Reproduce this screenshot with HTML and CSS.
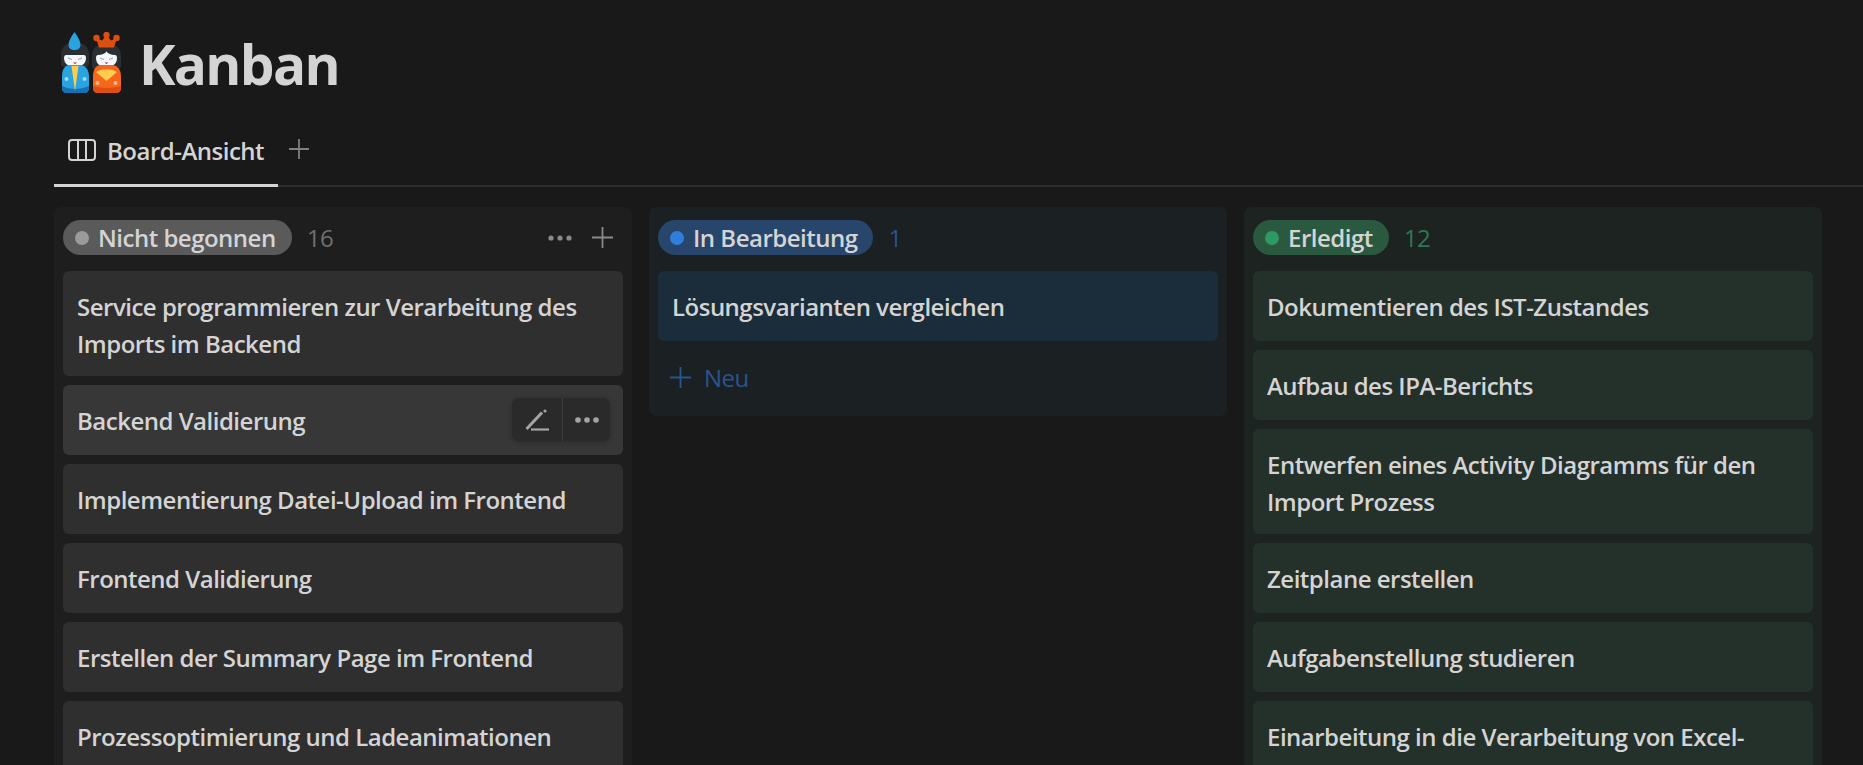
FILE: index.html
```html
<!DOCTYPE html>
<html>
<head>
    <title>Kanban</title>
    <link rel="stylesheet" href="styles.css">
</head>
<body>
    <header class="page-title">
        <svg class="title-icon" viewBox="0 0 62 62">
            <!-- blue doll -->
            <path d="M1 32V22c0-7 6-12 14-12s14 5 14 12v10c0 2-2 3-3 3H4c-1 0-3-1-3-3z" fill="#292f33"/>
            <path d="M14.500 0C11 5 8.500 9 8.500 13c0 3 2.500 5 6 5s6-2 6-5c0-4-2.500-8-6-13z" fill="#2aa4e0"/>
            <path d="M6 23h18c1 0 2 1 2 3 0 6-5 9-11 9S4 32 4 26c0-2 1-3 2-3z" fill="#f5f8fa"/>
            <path d="M8 26l4 1.500M22 26l-4 1.500" stroke="#99aab5" stroke-width="1.200" fill="none"/>
            <path d="M13 30.500h4l-2 1.500z" fill="#be1931"/>
            <path d="M9 33h12c5 1 8 5 8 12v11c0 3-2 5-5 5H7c-3 0-5-2-5-5V45c0-7 2-11 7-12z" fill="#2aa4e0"/>
            <path d="M2 54c4 2 8 3 13 3s9-1 14-3v2c0 3-2 5-5 5H7c-3 0-5-2-5-5z" fill="#1a6fae"/>
            <path d="M11.500 34h7L15 59z" fill="#ffcc4d"/>
            <circle cx="6.500" cy="47" r="2" fill="#a6d8f0"/>
            <circle cx="24.500" cy="47" r="2" fill="#a6d8f0"/>
            <!-- orange doll -->
            <path d="M32 34V24c0-8 6-13 14.500-13S61 16 61 24v10c0 2-1 3-3 3H35c-2 0-3-1-3-3z" fill="#292f33"/>
            <circle cx="36.500" cy="6" r="3.200" fill="#dd4f11"/>
            <circle cx="46.500" cy="3" r="3.200" fill="#dd4f11"/>
            <circle cx="56.500" cy="6" r="3.200" fill="#dd4f11"/>
            <path d="M36 6l6 2.500L46.500 3 51 8.500 57 6l-3 9.500H39z" fill="#dd4f11"/>
            <path d="M38 23c4 0 7-1.500 8.500-3.500C48 21.500 51 23 55 23c1.500 0 2 1.500 2 3 0 6-4.500 9-10.500 9S36 32 36 26c0-1.500.5-3 2-3z" fill="#f5f8fa"/>
            <path d="M40 26l4 1.500M53 26l-4 1.500" stroke="#99aab5" stroke-width="1.200" fill="none"/>
            <path d="M44.500 30.500h4l-2 1.500z" fill="#be1931"/>
            <path d="M40 33h13c5 1 8 5 8 12v11c0 3-2 5-5 5H38c-3 0-5-2-5-5V45c0-7 2-11 7-12z" fill="#f4671c"/>
            <path d="M33 54c5 1 9 2 13.500 2s9-1 14.500-2v2c0 3-2 5-5 5H38c-3 0-5-2-5-5z" fill="#dd4f11"/>
            <path d="M46.500 49L36 40c3-2 6-2.500 10.500-2.500S54 38 57 40z" fill="#ffcc4d"/>
            <circle cx="37.500" cy="51" r="2" fill="#ffb38a"/>
            <circle cx="55.500" cy="51" r="2" fill="#ffb38a"/>
        </svg>
        <h1>Kanban</h1>
    </header>

    <nav class="tabs">
        <div class="tab">
            <svg class="tab-icon" viewBox="0 0 28 22" fill="none" stroke="#d4d4d4" stroke-width="2">
                <rect x="1" y="1" width="26" height="20" rx="3"/>
                <path d="M10 1v20M18 1v20"/>
            </svg>
            <span>Board-Ansicht</span>
        </div>
        <svg class="tab-add" viewBox="0 0 20 20" stroke="#7f7f7f" stroke-width="1.800">
            <path d="M10 0v20M0 10h20"/>
        </svg>
    </nav>

    <main class="board">
        <section class="column column-gray">
            <div class="column-head">
                <span class="pill"><i class="dot"></i>Nicht begonnen</span>
                <span class="count">16</span>
                <span class="column-actions">
                    <svg class="more" viewBox="0 0 24 6" fill="#8a8a8a"><circle cx="3" cy="3" r="2.600"/><circle cx="12" cy="3" r="2.600"/><circle cx="21" cy="3" r="2.600"/></svg>
                    <svg class="plus" viewBox="0 0 21 21" stroke="#8a8a8a" stroke-width="1.800"><path d="M10.500 0v21M0 10.500h21"/></svg>
                </span>
            </div>
            <div class="card">Service programmieren zur Verarbeitung des Imports im Backend</div>
            <div class="card card-hover">Backend Validierung
                <div class="card-tools">
                    <span class="tool tool-edit">
                        <svg viewBox="0 0 24 22" fill="none" stroke="#a5a5a5">
                            <path d="M1.500 20L17 3.500" stroke-width="3"/>
                            <circle cx="20" cy="2" r="1.600" fill="#a5a5a5" stroke="none"/>
                            <path d="M6 20.500h18" stroke-width="2.200"/>
                        </svg>
                    </span>
                    <span class="tool">
                        <svg class="more" viewBox="0 0 24 6" fill="#a5a5a5"><circle cx="3" cy="3" r="2.800"/><circle cx="12" cy="3" r="2.800"/><circle cx="21" cy="3" r="2.800"/></svg>
                    </span>
                </div>
            </div>
            <div class="card">Implementierung Datei-Upload im Frontend</div>
            <div class="card">Frontend Validierung</div>
            <div class="card">Erstellen der Summary Page im Frontend</div>
            <div class="card">Prozessoptimierung und Ladeanimationen</div>
        </section>

        <section class="column column-blue">
            <div class="column-head">
                <span class="pill"><i class="dot"></i>In Bearbeitung</span>
                <span class="count">1</span>
            </div>
            <div class="card">Lösungsvarianten vergleichen</div>
            <div class="add-row">
                <svg class="plus" viewBox="0 0 21 21" stroke="#28558f" stroke-width="1.800"><path d="M10.500 0v21M0 10.500h21"/></svg>
                <span>Neu</span>
            </div>
        </section>

        <section class="column column-green">
            <div class="column-head">
                <span class="pill"><i class="dot"></i>Erledigt</span>
                <span class="count">12</span>
            </div>
            <div class="card">Dokumentieren des IST-Zustandes</div>
            <div class="card">Aufbau des IPA-Berichts</div>
            <div class="card">Entwerfen eines Activity Diagramms für den Import Prozess</div>
            <div class="card">Zeitplane erstellen</div>
            <div class="card">Aufgabenstellung studieren</div>
            <div class="card">Einarbeitung in die Verarbeitung von Excel-Dateien</div>
        </section>
    </main>
</body>
</html>
```

FILE: styles.css
```css
html, body {
    height: 100%;
    overflow: hidden;
}

body {
    margin: 0;
    background-color: #191919;
    color: #d4d4d4;
    font-family: "Open Sans", "Noto Sans", sans-serif;
    font-size: 24px;
    letter-spacing: -0.5px;
}

.page-title {
    display: flex;
    align-items: center;
    gap: 17px;
    height: 62px;
    padding: 32px 0 0 60px;
}

.title-icon {
    width: 62px;
    height: 62px;
    flex: none;
}

h1 {
    margin: 2px 0 0;
    font-size: 55px;
    font-weight: 700;
    line-height: 64px;
    letter-spacing: -1.7px;
}

.tabs {
    display: flex;
    align-items: flex-start;
    height: 58px;
    margin: 33px 0 20px 54px;
    border-bottom: 2px solid #2f2f2f;
}

.tab {
    display: flex;
    align-items: center;
    gap: 11px;
    width: 224px;
    height: 60px;
    padding: 0 0 11px 14px;
    box-sizing: border-box;
    border-bottom: 3px solid #d4d4d4;
    font-weight: 600;
}

.tab-icon {
    width: 28px;
    height: 22px;
    flex: none;
}

.tab-add {
    width: 20px;
    height: 20px;
    margin: 12px 0 0 11px;
}

.board {
    display: grid;
    grid-template-columns: repeat(3, 578px);
    gap: 17px;
    align-items: start;
    padding-left: 54px;
}

.column {
    padding: 13px 9px 9px;
    border-radius: 7px;
}

.column-head {
    display: flex;
    align-items: center;
    height: 35px;
    margin-bottom: 16px;
}

.pill {
    display: flex;
    align-items: center;
    height: 35px;
    padding: 0 16px 0 12px;
    border-radius: 18px;
    font-weight: 600;
}

.dot {
    width: 14px;
    height: 14px;
    margin-right: 9px;
    border-radius: 50%;
}

.count {
    margin-left: 15px;
}

.column-actions {
    display: flex;
    align-items: center;
    gap: 20px;
    margin-left: auto;
    padding-right: 10px;
}

.more {
    display: block;
    width: 24px;
    height: 6px;
}

.plus {
    display: block;
    width: 21px;
    height: 21px;
    flex: none;
}

.card {
    position: relative;
    box-sizing: border-box;
    min-height: 70px;
    margin-bottom: 9px;
    padding: 17px 14px 14px;
    border-radius: 6px;
    font-weight: 600;
    line-height: 37px;
}

.card-tools {
    position: absolute;
    top: 13px;
    right: 13px;
    display: flex;
    height: 43px;
    border-radius: 7px;
    background-color: #2a2a2a;
    box-shadow: 0 1px 5px rgba(0, 0, 0, 0.25);
}

.tool {
    display: flex;
    align-items: center;
    justify-content: center;
    width: 47px;
}

.tool-edit {
    width: 50px;
    border-right: 1px solid #3d3d3d;
}

.tool-edit svg {
    width: 24px;
    height: 22px;
}

.add-row {
    display: flex;
    align-items: center;
    gap: 13px;
    height: 37px;
    padding: 18px 12px 11px;
    color: #28558f;
}

.column-gray {
    height: 600px;
    background-color: #1e1e1e;
}

.column-gray .pill {
    background-color: #5a5a5a;
}

.column-gray .dot {
    background-color: #9b9b9b;
}

.column-gray .count {
    color: #6f6f6f;
}

.column-gray .card {
    background-color: #2f2f2f;
}

.column-gray .card-hover {
    background-color: #373737;
}

.column-blue {
    background-color: #1b2023;
}

.column-blue .pill {
    background-color: #28456c;
}

.column-blue .dot {
    background-color: #2e7fdc;
}

.column-blue .count {
    color: #28558f;
}

.column-blue .card {
    margin-bottom: 0;
    background-color: #1b2c3a;
}

.column-green {
    height: 600px;
    background-color: #1c2320;
}

.column-green .pill {
    background-color: #2b593f;
}

.column-green .dot {
    background-color: #2d9964;
}

.column-green .count {
    color: #2b7a52;
}

.column-green .card {
    background-color: #24302a;
}
```
